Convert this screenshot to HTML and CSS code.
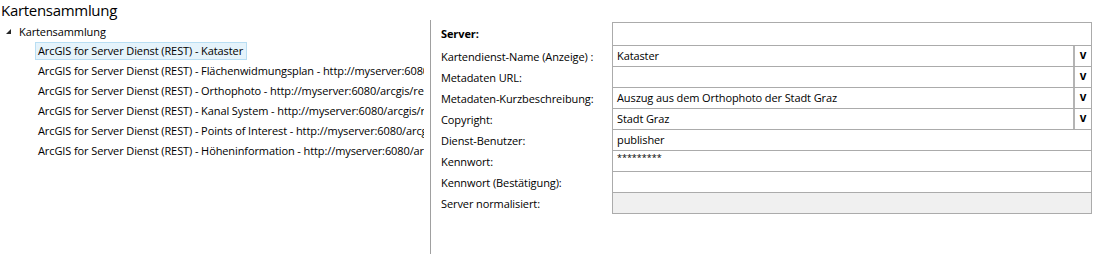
FILE: index.html
```html
<!DOCTYPE html>
<html lang="de">
<head>
<meta charset="utf-8">
<title>Kartensammlung</title>
<link rel="stylesheet" href="styles.css">
</head>
<body>
<div class="title">Kartensammlung</div>
<div class="main">
  <div class="tree">
    <div class="root">
      <svg class="caret" width="5" height="5" viewBox="0 0 5 5"><polygon points="5,0 5,5 0,5" fill="#262626"/></svg>
      <span>Kartensammlung</span>
    </div>
    <ul class="items">
      <li class="item selected">ArcGIS for Server Dienst (REST) - Kataster</li>
      <li class="item">ArcGIS for Server Dienst (REST) - Flächenwidmungsplan - http://myserver:6080/arcgis/rest/services/Flaechenwidmungsplan/MapServer</li>
      <li class="item">ArcGIS for Server Dienst (REST) - Orthophoto - http://myserver:6080/arcgis/rest/services/Orthophoto/MapServer</li>
      <li class="item">ArcGIS for Server Dienst (REST) - Kanal System - http://myserver:6080/arcgis/rest/services/Kanal/MapServer</li>
      <li class="item">ArcGIS for Server Dienst (REST) - Points of Interest - http://myserver:6080/arcgis/rest/services/POI/MapServer</li>
      <li class="item">ArcGIS for Server Dienst (REST) - Höheninformation - http://myserver:6080/arcgis/rest/services/Hoehe/MapServer</li>
    </ul>
  </div>
  <div class="props">
    <div class="form">
      <div class="label bold first">Server:</div>
      <div class="cell first"></div>

      <div class="label">Kartendienst-Name (Anzeige) :</div>
      <div class="cell combo"><span class="val">Kataster</span><span class="btn">v</span></div>

      <div class="label">Metadaten URL:</div>
      <div class="cell combo"><span class="val"></span><span class="btn">v</span></div>

      <div class="label">Metadaten-Kurzbeschreibung:</div>
      <div class="cell combo"><span class="val">Auszug aus dem Orthophoto der Stadt Graz</span><span class="btn">v</span></div>

      <div class="label">Copyright:</div>
      <div class="cell combo"><span class="val">Stadt Graz</span><span class="btn">v</span></div>

      <div class="label">Dienst-Benutzer:</div>
      <div class="cell"><span class="val">publisher</span></div>

      <div class="label">Kennwort:</div>
      <div class="cell"><span class="val pw">*********</span></div>

      <div class="label">Kennwort (Bestätigung):</div>
      <div class="cell"><span class="val"></span></div>

      <div class="label">Server normalisiert:</div>
      <div class="cell readonly"></div>
    </div>
  </div>
</div>
</body>
</html>
```

FILE: styles.css
```css
html, body {
  margin: 0;
  padding: 0;
  background: #ffffff;
}
body {
  font-family: "Open Sans", "Noto Sans", sans-serif;
  font-size: 11px;
  letter-spacing: -0.1px;
  color: #000;
  width: 1097px;
  height: 254px;
  overflow: hidden;
}
.title {
  height: 20px;
  line-height: 20px;
  font-size: 15px;
  letter-spacing: -0.3px;
  padding-left: 1px;
  color: #000;
}
.main {
  display: flex;
  height: 234px;
}
.tree {
  width: 424px;
  overflow: hidden;
  padding-top: 1px;
  margin-right: 6px;
}
.root {
  display: flex;
  align-items: center;
  height: 20px;
  white-space: nowrap;
}
.caret {
  margin-left: 6px;
  margin-right: 8px;
}
.items {
  list-style: none;
  margin: 0;
  padding: 1px 0 0 35px;
  display: flex;
  flex-direction: column;
  align-items: flex-start;
  gap: 2px;
}
.item {
  height: 18px;
  line-height: 16px;
  padding: 0 3px 0 2px;
  border: 1px solid transparent;
  white-space: nowrap;
  box-sizing: border-box;
}
.item.selected {
  background: #e5f3fb;
  border-color: #b9def3;
}
.props {
  border-left: 1px solid #a0a0a0;
  padding-left: 10px;
  flex: 1;
}
.form {
  display: grid;
  grid-template-columns: 171px 480px;
  margin-top: 2px;
}
.label {
  height: 21px;
  line-height: 21px;
  white-space: nowrap;
}
.label.first {
  height: 24px;
  line-height: 24px;
}
.bold {
  font-weight: bold;
}
.cell {
  height: 21px;
  box-sizing: border-box;
  border: 1px solid #ababab;
  border-top: none;
  display: flex;
  align-items: stretch;
}
.cell.first {
  height: 24px;
  border-top: 1px solid #ababab;
}
.val {
  flex: 1;
  padding-left: 4px;
  line-height: 20px;
  white-space: nowrap;
  overflow: hidden;
}
.val.pw {
  line-height: 14px;
  font-size: 9px;
  letter-spacing: 0;
}
.btn {
  width: 16px;
  border-left: 2px solid #b4b4b4;
  font-family: "Liberation Sans", sans-serif;
  font-weight: bold;
  font-size: 12px;
  letter-spacing: 0;
  line-height: 19px;
  text-align: center;
  color: #000;
}
.readonly {
  background: #f0f0f0;
}
```
